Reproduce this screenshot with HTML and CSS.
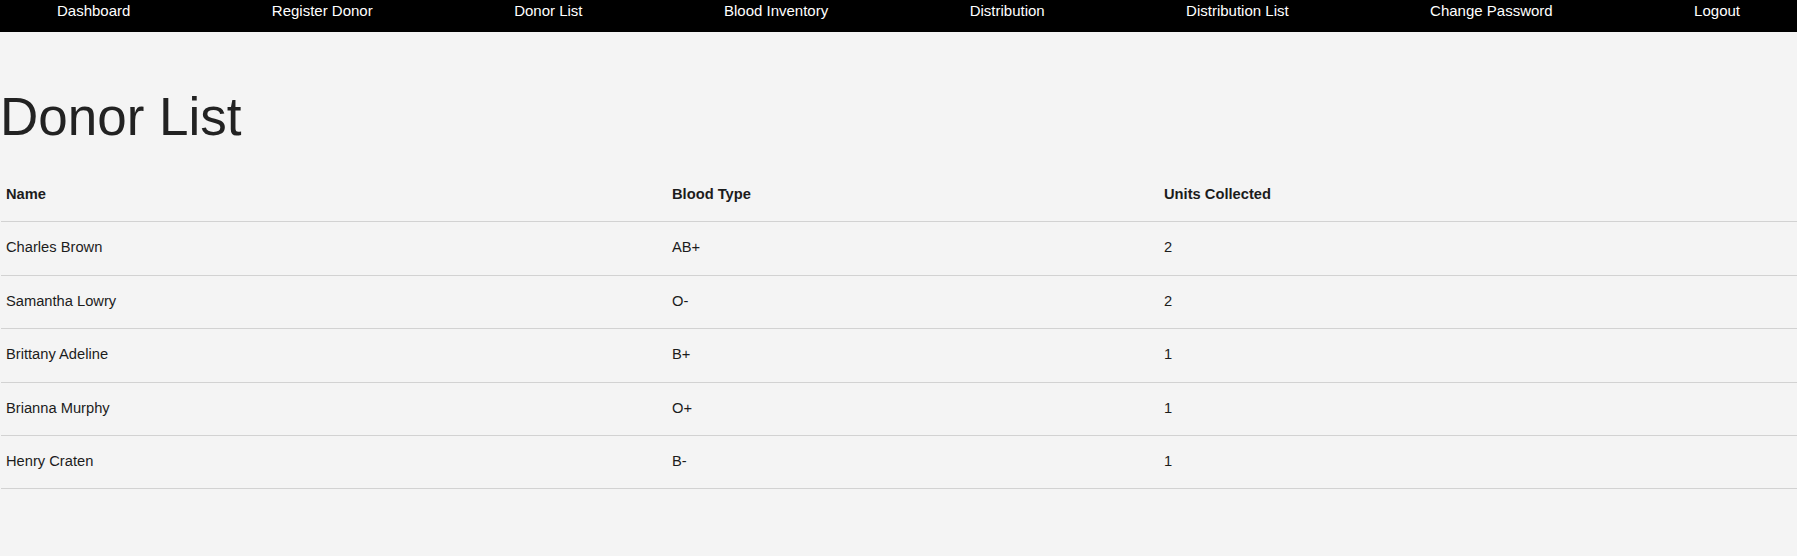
FILE: index.html
```html
<!DOCTYPE html>
<html lang="en">
<head>
<meta charset="utf-8">
<title>Donor List</title>
<link rel="stylesheet" href="styles.css">
</head>
<body>
<nav class="topnav">
  <a class="nav-link" href="#">Dashboard</a>
  <a class="nav-link" href="#">Register Donor</a>
  <a class="nav-link" href="#">Donor List</a>
  <a class="nav-link" href="#">Blood Inventory</a>
  <a class="nav-link" href="#">Distribution</a>
  <a class="nav-link" href="#">Distribution List</a>
  <a class="nav-link" href="#">Change Password</a>
  <a class="nav-link" href="#">Logout</a>
</nav>
<main class="content">
  <h1 class="page-title">Donor List</h1>
  <table class="donor-table">
    <colgroup>
      <col class="col-name">
      <col class="col-type">
      <col class="col-units">
    </colgroup>
    <thead>
      <tr><th>Name</th><th>Blood Type</th><th>Units Collected</th></tr>
    </thead>
    <tbody>
      <tr><td>Charles Brown</td><td>AB+</td><td>2</td></tr>
      <tr><td>Samantha Lowry</td><td>O-</td><td>2</td></tr>
      <tr><td>Brittany Adeline</td><td>B+</td><td>1</td></tr>
      <tr><td>Brianna Murphy</td><td>O+</td><td>1</td></tr>
      <tr><td>Henry Craten</td><td>B-</td><td>1</td></tr>
    </tbody>
  </table>
</main>
</body>
</html>
```

FILE: styles.css
```css
html, body {
  margin: 0;
  padding: 0;
}
body {
  background: #f4f4f4;
  font-family: "Liberation Sans", Arial, Helvetica, sans-serif;
  color: #1c1c1c;
}
.topnav {
  background: #000;
  height: 32px;
  box-sizing: border-box;
  padding: 2px 57px 0 57px;
  display: flex;
  justify-content: space-between;
  align-items: flex-start;
}
.nav-link {
  color: #fff;
  text-decoration: none;
  font-size: 15px;
  line-height: 17px;
}
.content {
  padding: 0;
}
.page-title {
  font-size: 53px;
  font-weight: normal;
  color: #222;
  margin: 54px 0 22px 0;
  line-height: 61px;
}
.donor-table {
  margin-left: 1px;
  width: calc(100% - 1px);
  border-collapse: collapse;
  table-layout: fixed;
  font-size: 14.7px;
}
.col-name { width: 666px; }
.col-type { width: 492px; }
.col-units { width: auto; }
.donor-table th,
.donor-table td {
  text-align: left;
  padding: 17px 5px 19px 5px;
  line-height: 16.4px;
  border-bottom: 1px solid #d2d2d2;
}
.donor-table th {
  font-weight: bold;
}
```
